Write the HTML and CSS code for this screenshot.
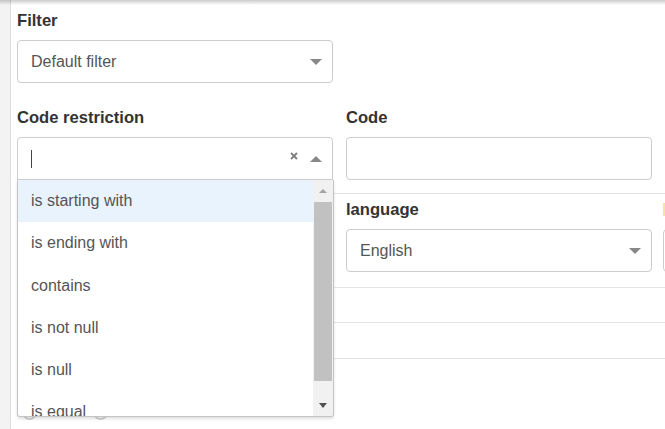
FILE: index.html
```html
<!DOCTYPE html>
<html lang="en">
<head>
<meta charset="utf-8">
<title>Filter</title>
<link rel="stylesheet" href="styles.css">
</head>
<body>
<div class="app">
  <aside class="rail"></aside>
  <main class="panel">
    <div class="row row-1">
      <div class="field col-a">
        <label class="label">Filter</label>
        <div class="select">
          <span class="value">Default filter</span>
          <span class="caret caret-down"></span>
        </div>
      </div>
    </div>

    <div class="row row-2">
      <div class="field col-a">
        <label class="label">Code restriction</label>
        <div class="combo">
          <div class="select select-open">
            <span class="cursor"></span>
            <span class="clear"><svg width="8" height="8" viewBox="0 0 8 8"><path d="M1 1L7 7M7 1L1 7" stroke="#7f7f7f" stroke-width="1.8" fill="none"/></svg></span>
            <span class="caret caret-up"></span>
          </div>
          <div class="dropdown">
            <ul class="options">
              <li class="option active">is starting with</li>
              <li class="option">is ending with</li>
              <li class="option">contains</li>
              <li class="option">is not null</li>
              <li class="option">is null</li>
              <li class="option">is equal</li>
            </ul>
            <div class="scrollbar">
              <div class="sb-btn"><span class="sb-arrow sb-up"></span></div>
              <div class="sb-track"><div class="sb-thumb"></div></div>
              <div class="sb-btn"><span class="sb-arrow sb-down"></span></div>
            </div>
          </div>
        </div>
      </div>
      <div class="field col-b">
        <label class="label">Code</label>
        <div class="input"></div>
      </div>
    </div>

    <div class="row row-sep row-3">
      <div class="field col-a"></div>
      <div class="field col-b">
        <label class="label">language</label>
        <div class="select">
          <span class="value">English</span>
          <span class="caret caret-down"></span>
        </div>
      </div>
      <div class="field col-c">
        <span class="marker"></span>
        <div class="select"></div>
      </div>
    </div>

    <div class="row row-sep row-4"></div>
    <div class="row row-sep row-5"></div>
    <div class="row row-sep row-6">
      <div class="radios">
        <span class="radio"></span>
        <span class="radio"></span>
      </div>
    </div>
  </main>
</div>
</body>
</html>
```

FILE: styles.css
```css
html, body {
  margin: 0;
  padding: 0;
  width: 665px;
  height: 429px;
  overflow: hidden;
  background: #fff;
}

body {
  font-family: "Liberation Sans", Arial, sans-serif;
  font-size: 16px;
  color: #333;
}

.app {
  position: relative;
  display: flex;
  height: 429px;
}

.app::before {
  content: "";
  position: absolute;
  left: 0;
  right: 0;
  top: 0;
  height: 5px;
  background: linear-gradient(rgba(0,0,0,0.2), rgba(0,0,0,0));
  z-index: 20;
  pointer-events: none;
}

.rail {
  flex: 0 0 10px;
  background: #f3f3f3;
  border-right: 1px solid #dcdcdc;
}

.panel {
  flex: 1;
  min-width: 0;
  padding-left: 6px;
  overflow: hidden;
  background: #fff;
}

.row {
  display: flex;
  align-items: flex-start;
}

.row-1 {
  padding-top: 10px;
}

.row-2 {
  margin-top: 24px;
  margin-bottom: 13px;
}

.row-sep {
  border-top: 1px solid #e3e3e3;
}

.row-3 {
  padding-top: 5px;
  padding-bottom: 15px;
}

.row-4 {
  height: 34px;
}

.row-5 {
  height: 35px;
}

.row-6 {
  padding-top: 46px;
}

.field {
  display: flex;
  flex-direction: column;
  flex: 0 0 auto;
}

.col-a {
  width: 316px;
  margin-right: 13px;
}

.col-b {
  width: 306px;
  margin-right: 11px;
}

.col-c {
  width: 200px;
}

.label {
  display: block;
  font-weight: bold;
  font-size: 16.6px;
  line-height: 22px;
  margin-bottom: 8px;
  color: #333;
}

.select,
.input {
  box-sizing: border-box;
  height: 43px;
  border: 1px solid #ccc;
  border-radius: 4px;
  background: #fff;
}

.select {
  display: flex;
  align-items: center;
  padding: 0 10px 0 13px;
  color: #555;
  font-size: 16px;
}

.value {
  flex: 1;
  white-space: nowrap;
}

.caret {
  width: 0;
  height: 0;
  border-left: 6px solid transparent;
  border-right: 6px solid transparent;
  margin-left: auto;
}

.caret-down {
  border-top: 6px solid #888;
}

.caret-up {
  border-bottom: 6px solid #888;
  margin-left: 0;
}

.combo {
  position: relative;
}

.select-open {
  border-bottom-left-radius: 0;
  border-bottom-right-radius: 0;
}

.cursor {
  width: 1px;
  height: 18px;
  background: #444;
}

.clear {
  display: flex;
  margin-left: auto;
  margin-right: 12px;
  margin-bottom: 5px;
}

.dropdown {
  position: absolute;
  top: 100%;
  left: 0;
  z-index: 10;
  box-sizing: border-box;
  width: 317px;
  height: 237px;
  display: flex;
  background: #fff;
  border: 1px solid #c4c4c4;
  border-top: none;
  border-radius: 0 0 3px 3px;
  box-shadow: 0 2px 3px rgba(0,0,0,0.12);
  overflow: hidden;
}

.options {
  flex: 1;
  list-style: none;
  margin: 0;
  padding: 0;
  overflow: hidden;
}

.option {
  height: 42.3px;
  line-height: 42.3px;
  padding-left: 13px;
  color: #555;
  white-space: nowrap;
}

.option.active {
  background: #e9f3fd;
}

.scrollbar {
  flex: 0 0 20px;
  display: flex;
  flex-direction: column;
  background: #f1f1f1;
}

.sb-btn {
  flex: 0 0 21px;
  display: flex;
  align-items: center;
  justify-content: center;
}

.sb-arrow {
  width: 0;
  height: 0;
  border-left: 4.5px solid transparent;
  border-right: 4.5px solid transparent;
}

.sb-up {
  border-bottom: 4px solid #a3a3a3;
}

.sb-down {
  border-top: 5px solid #505050;
}

.sb-track {
  flex: 1;
  padding: 1px 1px 0;
}

.sb-thumb {
  height: 179px;
  background: #c1c1c1;
}

.marker {
  display: block;
  width: 6px;
  height: 13px;
  margin-top: 4px;
  margin-bottom: 13px;
  background: #f9e3a3;
}

.radios {
  display: flex;
  gap: 56px;
  padding-left: 5px;
}

.radio {
  box-sizing: border-box;
  width: 15px;
  height: 15px;
  border: 2px solid #d2d2d2;
  border-radius: 50%;
  background: #fff;
}
```
